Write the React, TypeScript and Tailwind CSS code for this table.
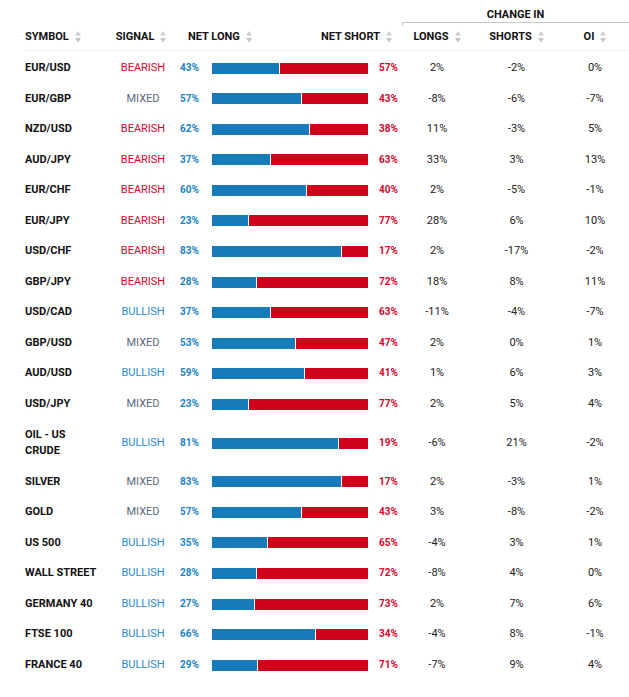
import React from "react";

type Signal = "BEARISH" | "MIXED" | "BULLISH";

interface Row {
  symbol: string;
  signal: Signal;
  long: number;
  longs: string;
  shorts: string;
  oi: string;
}

const rows: Row[] = [
  { symbol: "EUR/USD", signal: "BEARISH", long: 43, longs: "2%", shorts: "-2%", oi: "0%" },
  { symbol: "EUR/GBP", signal: "MIXED", long: 57, longs: "-8%", shorts: "-6%", oi: "-7%" },
  { symbol: "NZD/USD", signal: "BEARISH", long: 62, longs: "11%", shorts: "-3%", oi: "5%" },
  { symbol: "AUD/JPY", signal: "BEARISH", long: 37, longs: "33%", shorts: "3%", oi: "13%" },
  { symbol: "EUR/CHF", signal: "BEARISH", long: 60, longs: "2%", shorts: "-5%", oi: "-1%" },
  { symbol: "EUR/JPY", signal: "BEARISH", long: 23, longs: "28%", shorts: "6%", oi: "10%" },
  { symbol: "USD/CHF", signal: "BEARISH", long: 83, longs: "2%", shorts: "-17%", oi: "-2%" },
  { symbol: "GBP/JPY", signal: "BEARISH", long: 28, longs: "18%", shorts: "8%", oi: "11%" },
  { symbol: "USD/CAD", signal: "BULLISH", long: 37, longs: "-11%", shorts: "-4%", oi: "-7%" },
  { symbol: "GBP/USD", signal: "MIXED", long: 53, longs: "2%", shorts: "0%", oi: "1%" },
  { symbol: "AUD/USD", signal: "BULLISH", long: 59, longs: "1%", shorts: "6%", oi: "3%" },
  { symbol: "USD/JPY", signal: "MIXED", long: 23, longs: "2%", shorts: "5%", oi: "4%" },
  { symbol: "OIL - US\nCRUDE", signal: "BULLISH", long: 81, longs: "-6%", shorts: "21%", oi: "-2%" },
  { symbol: "SILVER", signal: "MIXED", long: 83, longs: "2%", shorts: "-3%", oi: "1%" },
  { symbol: "GOLD", signal: "MIXED", long: 57, longs: "3%", shorts: "-8%", oi: "-2%" },
  { symbol: "US 500", signal: "BULLISH", long: 35, longs: "-4%", shorts: "3%", oi: "1%" },
  { symbol: "WALL STREET", signal: "BULLISH", long: 28, longs: "-8%", shorts: "4%", oi: "0%" },
  { symbol: "GERMANY 40", signal: "BULLISH", long: 27, longs: "2%", shorts: "7%", oi: "6%" },
  { symbol: "FTSE 100", signal: "BULLISH", long: 66, longs: "-4%", shorts: "8%", oi: "-1%" },
  { symbol: "FRANCE 40", signal: "BULLISH", long: 29, longs: "-7%", shorts: "9%", oi: "4%" },
];

const signalColor: Record<Signal, string> = {
  BEARISH: "text-[#d6062c]",
  MIXED: "text-[#5b6878]",
  BULLISH: "text-[#2a8bd0]",
};

function SortIcon() {
  return (
    <svg width="6" height="12" viewBox="0 0 6 12" className="ml-[6px] shrink-0">
      <polygon points="3,0 6,4.5 0,4.5" fill="#cfcfcf" />
      <polygon points="0,7 6,7 3,11.5" fill="#c4c4c4" />
    </svg>
  );
}

function Head({ label, className = "" }: { label: string; className?: string }) {
  return (
    <div className={`flex items-center ${className}`}>
      <span>{label}</span>
      <SortIcon />
    </div>
  );
}

export default function App() {
  return (
    <div
      className="w-[629px] h-[697px] bg-white pl-[25px] text-[11px] text-[#111]"
      style={{ fontFamily: "Roboto, 'Liberation Sans', sans-serif" }}
    >
      {/* group header */}
      <div className="flex">
        <div className="w-[377px]" />
        <div className="relative h-[23px] flex-1 border-b border-[#c8c8c8] pt-[7px] text-center font-bold leading-[16px]">
          CHANGE IN
          <div className="absolute left-0 top-full h-[4px] w-px bg-[#c8c8c8]" />
        </div>
      </div>

      {/* column headers */}
      <div className="flex border-b border-[#eeeeee] pt-[6px] pb-[5px] font-bold leading-[16px]">
        <Head label="SYMBOL" className="w-[85px]" />
        <Head label="SIGNAL" className="w-[66px] justify-center pr-[4px]" />
        <div className="w-[226px] flex justify-between pl-[12px] pr-[10px]">
          <Head label="NET LONG" />
          <Head label="NET SHORT" />
        </div>
        <Head label="LONGS" className="w-[70px] justify-center" />
        <Head label="SHORTS" className="w-[89px] justify-center" />
        <Head label="OI" className="w-[68px] justify-center" />
      </div>

      {rows.map((r, i) => (
        <div
          key={r.symbol}
          className={`flex items-center pb-[5px] leading-[16.5px] ${i === 0 ? "pt-[9px]" : "pt-[9.05px]"}`}
        >
          <div className="w-[85px] font-bold whitespace-pre-line">{r.symbol}</div>
          <div className={`w-[66px] text-center ${signalColor[r.signal]}`}>{r.signal}</div>
          <div className="w-[226px] flex items-center">
            <span className="w-[23px] text-right text-[10px] font-bold text-[#2183c2]">{r.long}%</span>
            <div className="ml-[13px] flex h-[11px] w-[156px]">
              <div className="h-full bg-[#177bb9]" style={{ width: `${r.long}%` }} />
              <div className="h-full flex-1 border-l border-white bg-[#d0021b]" />
            </div>
            <span className="ml-[11px] text-[10px] font-bold text-[#d6062c]">{100 - r.long}%</span>
          </div>
          <div className="w-[70px] text-center text-[#222]">{r.longs}</div>
          <div className="w-[89px] text-center text-[#222]">{r.shorts}</div>
          <div className="w-[68px] text-center text-[#222]">{r.oi}</div>
        </div>
      ))}
    </div>
  );
}
